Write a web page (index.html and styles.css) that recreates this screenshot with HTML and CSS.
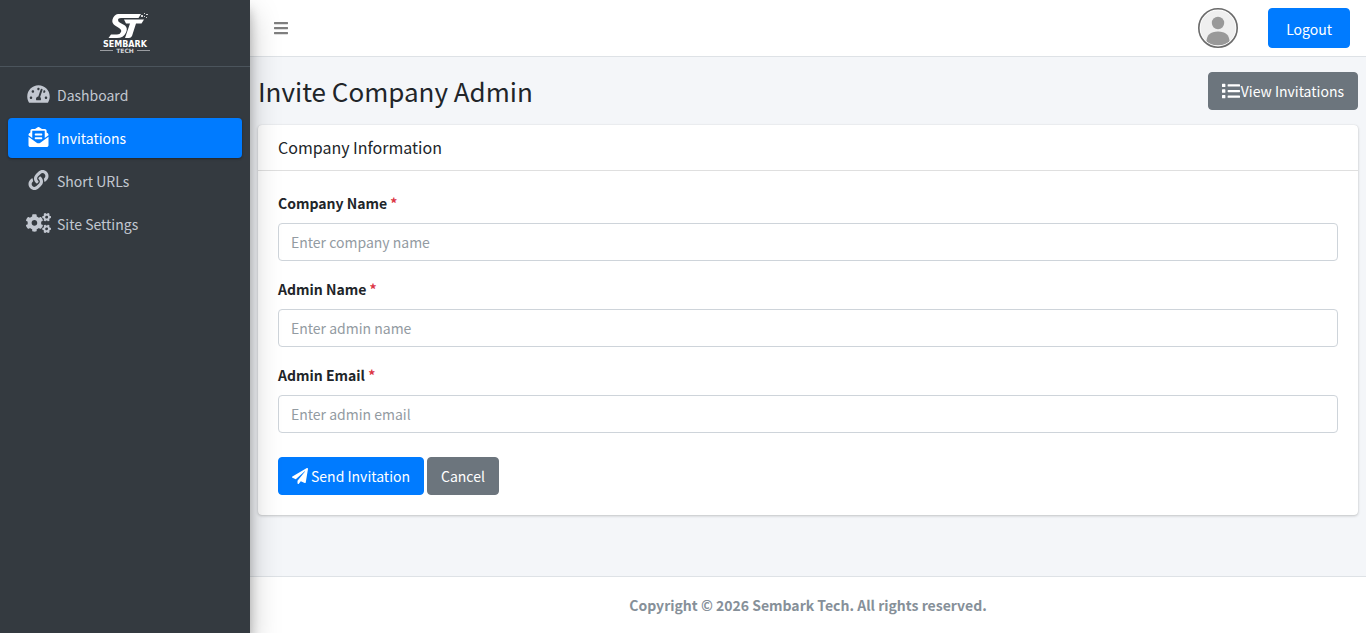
FILE: index.html
```html
<!DOCTYPE html>
<html lang="en">
<head>
<meta charset="utf-8">
<meta name="viewport" content="width=device-width, initial-scale=1">
<title>Invite Company Admin</title>
<link rel="stylesheet" href="styles.css">
</head>
<body>
<div class="wrapper">
  <aside class="sidebar">
    <a class="brand" href="#" aria-label="Sembark Tech">
      <svg class="brand-logo" viewBox="0 0 50 42" aria-hidden="true">
        <path d="M18 2H41L38.500 6H21Q18 6 18 8Q18 10 20.500 11L25 13.500Q28 16 26 20.500Q23.500 26 17 26H8.500L11 22.500H17Q20 22.500 21 20Q22 18 19 16L15 13.500Q11.500 11 12.500 7.500Q14 2.500 18 2Z" fill="#fff"/>
        <path d="M24 7.500H44L41.500 11.500H36L32 24Q31 26 29 26H25L30 11.500H26Z" fill="#fff"/>
        <path d="M41 3h2v2h-2zM44 1h1v1h-1zM46 2h2v1h-2zM44 4h1v1h-1zM46 5h1v1h-1z" fill="#d5d7d9"/>
        <path d="M0 38.500H13M37 38.500H50" stroke="#9a9da1" stroke-width="1"/>
        <text x="25" y="35" text-anchor="middle" class="logo-name">SEMBARK</text>
        <text x="25" y="41" text-anchor="middle" class="logo-sub">TECH</text>
      </svg>
    </a>
    <nav class="side-nav">
      <a class="nav-link" href="#">
        <svg class="nav-icon" viewBox="0 0 576 512" aria-hidden="true"><path fill="currentColor" d="M288 32C128.940 32 0 160.940 0 320c0 52.800 14.250 102.260 39.060 144.800 5.610 9.620 16.300 15.200 27.440 15.200h443c11.140 0 21.830-5.580 27.440-15.200C561.750 422.260 576 372.800 576 320c0-159.060-128.940-288-288-288zm0 64c14.710 0 26.580 10.130 30.320 23.650-1.110 2.260-2.640 4.230-3.450 6.670l-9.220 27.670c-5.130 3.490-10.970 6.010-17.640 6.010-17.670 0-32-14.330-32-32S270.330 96 288 96zM96 384c-17.670 0-32-14.330-32-32s14.330-32 32-32 32 14.330 32 32-14.330 32-32 32zm48-160c-17.670 0-32-14.330-32-32s14.330-32 32-32 32 14.330 32 32-14.330 32-32 32zm246.770-72.410l-61.330 184C343.130 347.330 352 364.540 352 384c0 11.720-3.380 22.550-8.880 32H232.880c-5.500-9.450-8.880-20.280-8.880-32 0-33.940 26.500-61.430 59.900-63.590l61.340-184.010c4.170-12.560 17.730-19.450 30.360-15.170 12.570 4.190 19.350 17.790 15.170 30.360zm14.660 57.200l15.520-46.550c3.470-1.290 7.130-2.230 11.050-2.230 17.670 0 32 14.330 32 32s-14.330 32-32 32c-11.380-.010-20.890-6.280-26.570-15.220zM480 384c-17.670 0-32-14.330-32-32s14.330-32 32-32 32 14.330 32 32-14.330 32-32 32z"/></svg>
        <span>Dashboard</span>
      </a>
      <a class="nav-link active" href="#" aria-current="page">
        <svg class="nav-icon" viewBox="-32 0 576 512" aria-hidden="true"><path fill="currentColor" d="M176 216h160c8.840 0 16-7.160 16-16v-16c0-8.840-7.160-16-16-16H176c-8.840 0-16 7.160-16 16v16c0 8.840 7.160 16 16 16zm-16 80c0 8.840 7.160 16 16 16h160c8.840 0 16-7.160 16-16v-16c0-8.840-7.160-16-16-16H176c-8.840 0-16 7.160-16 16v16zm96 121.130c-16.420 0-32.840-5.060-46.860-15.190L0 250.860V464c0 26.510 21.490 48 48 48h416c26.510 0 48-21.490 48-48V250.860L302.860 401.940c-14.020 10.120-30.440 15.190-46.860 15.190zm237.610-254.180c-8.850-6.940-17.240-13.470-29.610-22.810V96c0-26.510-21.490-48-48-48h-77.550c-3.040-2.200-5.870-4.260-9.040-6.560C312.600 29.170 279.200-.350 256 0c-23.200-.350-56.590 29.170-73.410 41.440-3.170 2.300-6 4.360-9.040 6.560H96c-26.510 0-48 21.490-48 48v44.140c-12.370 9.330-20.760 15.870-29.610 22.810A47.995 47.995 0 0 0 0 200.720v10.650l96 69.350V96h320v184.720l96-69.350v-10.650c0-14.740-6.780-28.670-18.390-37.770z"/></svg>
        <span>Invitations</span>
      </a>
      <a class="nav-link" href="#">
        <svg class="nav-icon" viewBox="-32 0 576 512" aria-hidden="true"><path fill="currentColor" d="M326.612 185.391c59.747 59.809 58.927 155.698.36 214.590-.110.120-.240.250-.360.370l-67.200 67.200c-59.270 59.270-155.699 59.262-214.960 0-59.270-59.260-59.270-155.700 0-214.960l37.106-37.106c9.840-9.840 26.786-3.300 27.294 10.606.648 17.722 3.826 35.527 9.690 52.721 1.986 5.822.567 12.262-3.783 16.612l-13.087 13.087c-28.026 28.026-28.905 73.660-1.155 101.960 28.024 28.579 74.086 28.749 102.325.510l67.200-67.190c28.191-28.191 28.073-73.757 0-101.830-3.701-3.694-7.429-6.564-10.341-8.569a16.037 16.037 0 0 1-6.947-12.606c-.396-10.567 3.348-21.456 11.698-29.806l21.054-21.055c5.521-5.521 14.182-6.199 20.584-1.731a152.482 152.482 0 0 1 20.522 17.197zM467.547 44.449c-59.261-59.262-155.690-59.270-214.960 0l-67.200 67.200c-.120.120-.250.250-.360.370-58.566 58.892-59.387 154.781.360 214.590a152.454 152.454 0 0 0 20.521 17.196c6.402 4.468 15.064 3.789 20.584-1.731l21.054-21.055c8.350-8.350 12.094-19.239 11.698-29.806a16.037 16.037 0 0 0-6.947-12.606c-2.912-2.005-6.640-4.875-10.341-8.569-28.073-28.073-28.191-73.639 0-101.830l67.200-67.190c28.239-28.239 74.300-28.069 102.325.510 27.750 28.300 26.872 73.934-1.155 101.960l-13.087 13.087c-4.350 4.350-5.769 10.790-3.783 16.612 5.864 17.194 9.042 34.999 9.690 52.721.509 13.906 17.454 20.446 27.294 10.606l37.106-37.106c59.271-59.259 59.271-155.699.001-214.959z"/></svg>
        <span>Short URLs</span>
      </a>
      <a class="nav-link" href="#">
        <svg class="nav-icon wide" viewBox="0 0 640 512" aria-hidden="true" fill="currentColor">
          <path id="small-gear" d="M512.100 191l-8.200 14.300c-3 5.300-9.400 7.500-15.100 5.400-11.800-4.400-22.600-10.700-32.100-18.600-4.600-3.800-5.800-10.500-2.800-15.700l8.200-14.300c-6.900-8-12.300-17.300-15.900-27.400h-16.500c-6 0-11.200-4.300-12.200-10.300-2-12-2.100-24.600 0-37.100 1-6 6.200-10.400 12.200-10.400h16.500c3.600-10.100 9-19.400 15.900-27.400l-8.200-14.300c-3-5.200-1.900-11.900 2.800-15.700 9.500-7.900 20.400-14.200 32.100-18.600 5.700-2.100 12.100.1 15.100 5.400l8.200 14.300c10.500-1.900 21.200-1.900 31.700 0L552 6.300c3-5.300 9.400-7.500 15.100-5.400 11.800 4.400 22.600 10.700 32.100 18.600 4.600 3.800 5.800 10.500 2.800 15.700l-8.200 14.300c6.900 8 12.300 17.300 15.900 27.400h16.500c6 0 11.200 4.300 12.200 10.300 2 12 2.100 24.600 0 37.100-1 6-6.200 10.400-12.200 10.400h-16.500c-3.600 10.100-9 19.400-15.900 27.400l8.200 14.300c3 5.200 1.900 11.900-2.800 15.700-9.500 7.900-20.400 14.200-32.100 18.600-5.700 2.100-12.100-.1-15.100-5.400l-8.200-14.300c-10.400 1.900-21.200 1.900-31.700 0zm-10.500-58.800c38.500 29.600 82.400-14.300 52.800-52.800-38.500-29.700-82.400 14.300-52.800 52.800z"/>
          <use href="#small-gear" y="300"/>
          <path d="M386.300 286.100l33.700 16.800c10.100 5.800 14.500 18.100 10.500 29.100-8.900 24.200-26.400 46.400-42.600 65.800-7.400 8.900-20.200 11.100-30.300 5.300l-29.100-16.800c-16 13.700-34.600 24.600-54.900 31.700v33.600c0 11.600-8.300 21.600-19.700 23.600-24.600 4.200-50.400 4.400-75.900 0-11.500-2-20-11.900-20-23.600V418c-20.300-7.200-38.900-18-54.900-31.700L74 403c-10 5.800-22.900 3.600-30.300-5.300-16.200-19.400-33.300-41.600-42.200-65.700-4-10.900.4-23.200 10.500-29.100l33.300-16.800c-3.900-20.900-3.900-42.400 0-63.400L12 205.800c-10.100-5.800-14.600-18.100-10.500-29 8.900-24.200 26-46.400 42.200-65.800 7.400-8.900 20.200-11.100 30.300-5.300l29.100 16.800c16-13.700 34.600-24.600 54.900-31.700V57.100c0-11.500 8.200-21.500 19.600-23.500 24.600-4.200 50.500-4.400 76-.1 11.500 2 20 11.900 20 23.600v33.600c20.300 7.200 38.900 18 54.900 31.700l29.100-16.800c10-5.800 22.900-3.600 30.300 5.300 16.200 19.400 33.200 41.600 42.100 65.800 4 10.900.1 23.200-10 29.100l-33.700 16.800c3.900 21 3.900 42.500 0 63.500zm-117.600 21.100c59.200-77-28.700-164.900-105.700-105.700-59.200 77 28.700 164.900 105.700 105.700z"/>
        </svg>
        <span>Site Settings</span>
      </a>
    </nav>
  </aside>

  <div class="page">
    <header class="topbar">
      <button class="menu-toggle" type="button" aria-label="Toggle menu">
        <svg viewBox="0 0 448 512" aria-hidden="true"><path fill="currentColor" d="M16 132h416c8.837 0 16-7.163 16-16V76c0-8.837-7.163-16-16-16H16C7.163 60 0 67.163 0 76v40c0 8.837 7.163 16 16 16zm0 160h416c8.837 0 16-7.163 16-16v-40c0-8.837-7.163-16-16-16H16c-8.837 0-16 7.163-16 16v40c0 8.837 7.163 16 16 16zm0 160h416c8.837 0 16-7.163 16-16v-40c0-8.837-7.163-16-16-16H16c-8.837 0-16 7.163-16 16v40c0 8.837 7.163 16 16 16z"/></svg>
      </button>
      <div class="account">
        <svg class="avatar" viewBox="0 0 40 40" role="img" aria-label="User avatar">
          <circle cx="20" cy="20" r="19" fill="#efefef"/>
          <circle cx="20" cy="15" r="6.200" fill="#999"/>
          <path d="M8.500 34Q8.500 23.500 20 23.500T31.500 34Q27 37.500 20 37.500T8.500 34Z" fill="#999"/>
          <circle cx="20" cy="20" r="18" fill="none" stroke="#fff" stroke-width="1"/>
          <circle cx="20" cy="20" r="19.200" fill="none" stroke="#6b6b6b" stroke-width="1.600"/>
        </svg>
        <button class="btn btn-primary logout" type="button">Logout</button>
      </div>
    </header>

    <main class="content">
      <div class="content-header">
        <h1>Invite Company Admin</h1>
        <a class="btn btn-secondary" href="#">
          <svg class="list-icon" viewBox="0 0 512 512" aria-hidden="true"><path fill="currentColor" d="M16 48h64a16 16 0 0 1 16 16v64a16 16 0 0 1-16 16H16a16 16 0 0 1-16-16V64a16 16 0 0 1 16-16zm0 160h64a16 16 0 0 1 16 16v64a16 16 0 0 1-16 16H16a16 16 0 0 1-16-16v-64a16 16 0 0 1 16-16zm0 160h64a16 16 0 0 1 16 16v64a16 16 0 0 1-16 16H16a16 16 0 0 1-16-16v-64a16 16 0 0 1 16-16zM176 64h320a16 16 0 0 1 16 16v32a16 16 0 0 1-16 16H176a16 16 0 0 1-16-16V80a16 16 0 0 1 16-16zm0 160h320a16 16 0 0 1 16 16v32a16 16 0 0 1-16 16H176a16 16 0 0 1-16-16v-32a16 16 0 0 1 16-16zm0 160h320a16 16 0 0 1 16 16v32a16 16 0 0 1-16 16H176a16 16 0 0 1-16-16v-32a16 16 0 0 1 16-16z"/></svg>
          <span>View Invitations</span>
        </a>
      </div>

      <section class="card">
        <h2 class="card-header">Company Information</h2>
        <form class="card-body">
          <div class="form-group">
            <label for="company-name">Company Name <span class="required">*</span></label>
            <input id="company-name" type="text" placeholder="Enter company name">
          </div>
          <div class="form-group">
            <label for="admin-name">Admin Name <span class="required">*</span></label>
            <input id="admin-name" type="text" placeholder="Enter admin name">
          </div>
          <div class="form-group">
            <label for="admin-email">Admin Email <span class="required">*</span></label>
            <input id="admin-email" type="email" placeholder="Enter admin email">
          </div>
          <div class="actions">
            <button class="btn btn-primary" type="submit">
              <svg class="send-icon" viewBox="0 0 512 512" aria-hidden="true"><path fill="currentColor" d="M476 3.200L12.500 270.600c-18.100 10.400-15.800 35.600 2.200 43.200L121 358.400l287.300-253.200c5.500-4.900 13.300 2.600 8.600 8.300L176 407v80.500c0 23.600 28.500 32.900 42.500 15.800L282 426l124.600 52.200c14.200 6 30.400-2.900 33-18.200l72-432C515 7.800 493.300-6.800 476 3.200z"/></svg>
              <span>Send Invitation</span>
            </button>
            <a class="btn btn-secondary" href="#">Cancel</a>
          </div>
        </form>
      </section>
    </main>

    <footer class="footer">Copyright © 2026 Sembark Tech. All rights reserved.</footer>
  </div>
</div>
</body>
</html>
```
FILE: styles.css
```css
*, *::before, *::after { box-sizing: border-box; }

body {
  margin: 0;
  font-family: "Source Sans Pro", "Noto Sans CJK SC", sans-serif;
  font-size: 14px;
  line-height: 24px;
  color: #212529;
  background: #f4f6f9;
}

a { color: inherit; text-decoration: none; }
button, input { font: inherit; }

.wrapper { display: flex; min-height: 100vh; }

/* Sidebar */
.sidebar {
  position: relative;
  z-index: 1;
  flex: 0 0 250px;
  background: #343a40;
  box-shadow: 0 14px 28px rgba(0, 0, 0, .25), 0 10px 10px rgba(0, 0, 0, .22);
}
.brand {
  display: flex;
  justify-content: center;
  padding: 12px 8px;
  border-bottom: 1px solid #4b545c;
}
.brand-logo { width: 50px; height: 42px; overflow: visible; }
.logo-name { font: 700 8px "DejaVu Sans", sans-serif; fill: #fff; }
.logo-sub { font: 700 6px "DejaVu Sans", sans-serif; fill: #d5d7d9; }

.side-nav {
  display: flex;
  flex-direction: column;
  gap: 3px;
  padding: 8px;
}
.nav-link {
  display: flex;
  align-items: center;
  gap: 5px;
  padding: 8px 17px;
  border-radius: 4px;
  color: #c2c7d0;
}
.nav-link.active {
  color: #fff;
  background: #007bff;
  box-shadow: 0 1px 3px rgba(0, 0, 0, .12), 0 1px 2px rgba(0, 0, 0, .24);
}
.nav-icon { width: 27px; height: 20px; padding: 0 2px; margin-bottom: 2px; }
.nav-icon.wide { padding: 0 1px; }

/* Page column */
.page {
  display: flex;
  flex: 1;
  flex-direction: column;
  min-width: 0;
}
.topbar {
  display: flex;
  align-items: center;
  justify-content: space-between;
  padding: 8px 16px 8px 8px;
  border-bottom: 1px solid #dee2e6;
  background: #fff;
}
.menu-toggle {
  display: flex;
  padding: 12px 16px;
  border: 0;
  background: none;
  color: #7f7f7f;
}
.menu-toggle svg { width: 14px; height: 16px; }
.account { display: flex; align-items: center; gap: 30px; }
.avatar { width: 40px; height: 40px; }

.btn {
  display: inline-flex;
  align-items: center;
  padding: 6px 13px;
  border: 1px solid transparent;
  border-radius: 4px;
  color: #fff;
  white-space: nowrap;
}
.btn-primary { background: #007bff; border-color: #007bff; }
.btn-secondary { background: #6c757d; border-color: #6c757d; }
.logout { padding: 8px 17px 6px; }

.content { flex: 1; padding: 15px 8px; }
.content-header {
  display: flex;
  align-items: center;
  justify-content: space-between;
  margin-bottom: 15px;
}
h1 { margin: 0; font-size: 26px; font-weight: 400; line-height: 38px; }
.list-icon { width: 18px; height: 18px; margin-right: 1px; }
.send-icon { width: 16px; height: 16px; margin-right: 3px; }

.card {
  border-radius: 4px;
  background: #fff;
  box-shadow: 0 0 1px rgba(0, 0, 0, .13), 0 1px 3px rgba(0, 0, 0, .2);
}
.card-header {
  margin: 0;
  padding: 10px 20px 11px;
  border-bottom: 1px solid #dfdfdf;
  font-size: 16px;
  font-weight: 400;
}
.card-body { padding: 20px; }
.form-group { margin-bottom: 16px; }
.form-group label {
  display: block;
  margin-bottom: 8px;
  font-weight: 700;
}
.required { color: #dc3545; }
.form-group input {
  display: block;
  width: 100%;
  height: 38px;
  padding: 6px 12px;
  border: 1px solid #ced4da;
  border-radius: 4px;
  background: #fff;
  color: #495057;
}
.form-group input::placeholder { color: #939ba2; opacity: 1; }
.actions { display: flex; gap: 3px; margin-top: 24px; }

.footer {
  padding: 16px;
  border-top: 1px solid #dee2e6;
  background: #fff;
  color: #869099;
  font-weight: 700;
  text-align: center;
}
```
